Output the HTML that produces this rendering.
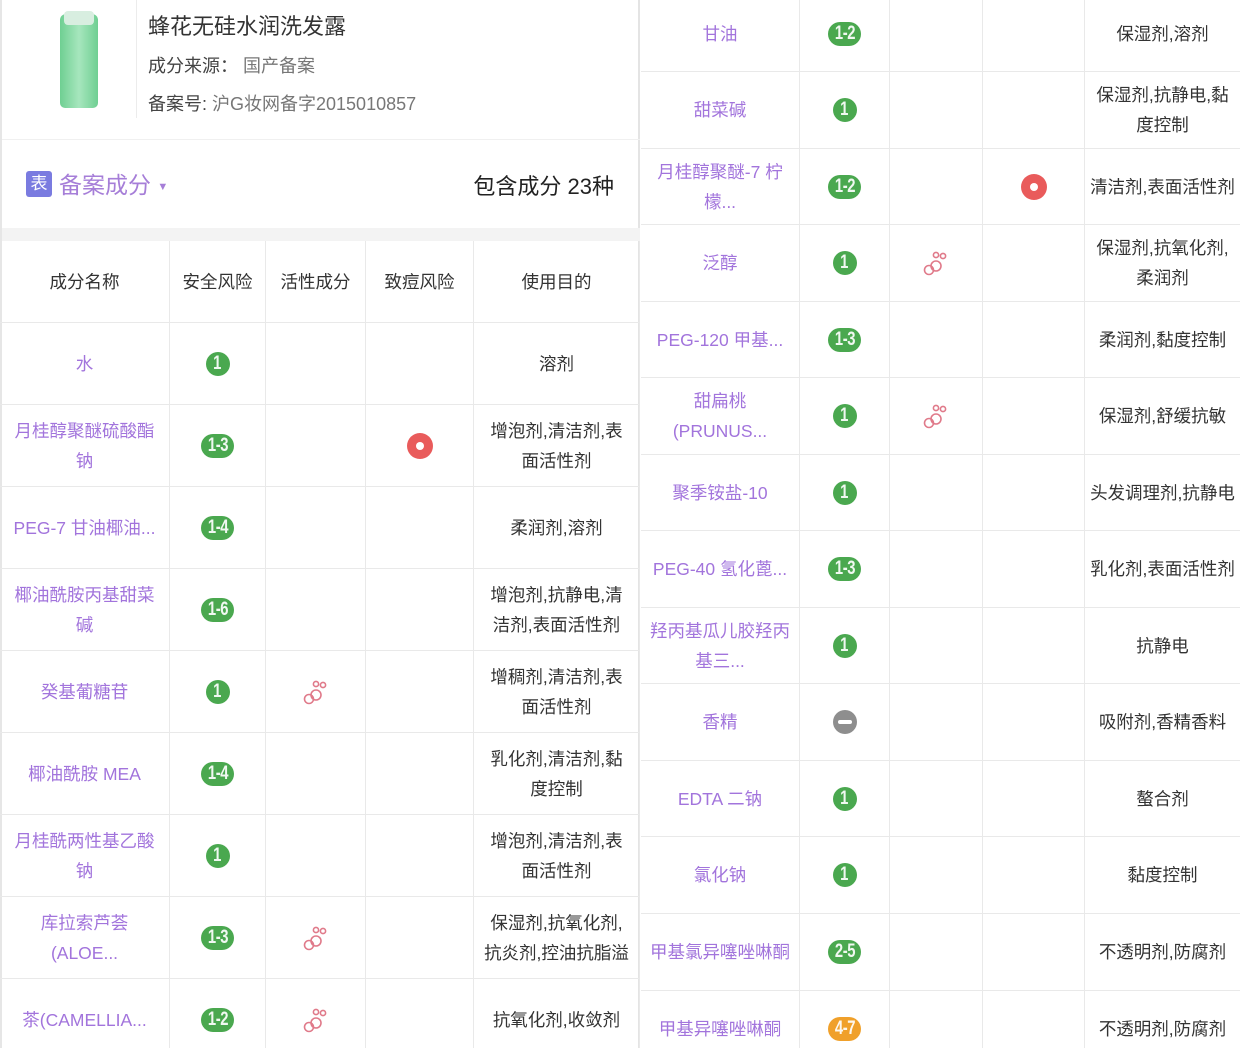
<!DOCTYPE html>
<html><head><meta charset="utf-8"><style>
*{margin:0;padding:0;box-sizing:border-box}
html,body{width:1240px;height:1048px;overflow:hidden}
body{background:#fff;font-family:"Liberation Sans","Noto Sans CJK SC",sans-serif;position:relative}
.row{position:absolute;display:flex;border-bottom:1px solid #e9e9e9}
.c{display:flex;align-items:center;justify-content:center;text-align:center;border-right:1px solid #e9e9e9;height:100%;font-size:17.5px;line-height:30px;color:#333}
.n{color:#a274dc}
.b{display:inline-flex;align-items:center;justify-content:center;height:24px;min-width:24px;padding:0 4px;border-radius:12px;background:#4aa84f;color:#fff}
.b span{display:inline-block;font-size:19px;line-height:24px;transform:scaleX(.78);letter-spacing:-0.5px;opacity:.92}
.o{background:#f0a02a}
.acne{width:26px;height:26px;border-radius:50%;background:#e95b5b;position:relative}
.acne:after{content:"";position:absolute;left:9px;top:9px;width:8px;height:8px;border-radius:50%;background:#fff}
.minus{width:24px;height:24px;border-radius:50%;background:#8e8e8e;position:relative}
.minus:after{content:"";position:absolute;left:5px;top:10px;width:14px;height:4px;background:#fff;border-radius:2px}
</style></head><body>
<div style="position:absolute;left:0;top:0;width:640px;height:1048px;border-right:2px solid #e4e4e4;border-left:2px solid #e6e6e6">
 <div style="position:absolute;left:58px;top:14px;width:38px;height:94px;border-radius:6px 6px 5px 5px;background:linear-gradient(90deg,#6fcf92,#a6e6bd 50%,#6fcf92)"></div>
 <div style="position:absolute;left:62px;top:11px;width:30px;height:14px;background:#d8eee0;border-radius:4px"></div>
 <div style="position:absolute;left:134px;top:0;width:1px;height:118px;background:#ececec"></div>
 <div style="position:absolute;left:146px;top:9px;font-size:22px;color:#333">蜂花无硅水润洗发露</div>
 <div style="position:absolute;left:146px;top:52px;font-size:18px;color:#444">成分来源：&nbsp;<span style="color:#777">国产备案</span></div>
 <div style="position:absolute;left:146px;top:90px;font-size:18px;color:#444">备案号: <span style="color:#777">沪G妆网备字2015010857</span></div>
 <div style="position:absolute;left:0;top:139px;width:638px;height:1px;background:#f0f0f0"></div>
 <div style="position:absolute;left:24px;top:171px;width:26px;height:26px;background:#7a7be0;border-radius:3px;color:#fff;font-size:17px;text-align:center;line-height:26px">表</div>
 <div style="position:absolute;left:57px;top:166px;font-size:23px;color:#a67ed8">备案成分 <span style="font-size:11px;vertical-align:middle">▼</span></div>
 <div style="position:absolute;right:24px;top:169px;font-size:22px;color:#222">包含成分 23种</div>
 <div style="position:absolute;left:0;top:228px;width:638px;height:13px;background:#f3f3f3"></div>
</div>
<div style="position:absolute;left:0;top:241px;width:640px">
 <div class="row" style="top:0;height:82px"><div class="c" style="width:170px">成分名称</div><div class="c" style="width:96px">安全风险</div><div class="c" style="width:100px">活性成分</div><div class="c" style="width:108px">致痘风险</div><div class="c" style="width:166px">使用目的</div></div>
</div>
<div style="position:absolute;left:0;top:323px;width:640px">
 <div class="row" style="top:0;height:82px"><div class="c n" style="width:170px">水</div><div class="c" style="width:96px"><b class="b"><span>1</span></b></div><div class="c" style="width:100px"></div><div class="c" style="width:108px"></div><div class="c" style="width:166px">溶剂</div></div>
 <div class="row" style="top:82px;height:82px"><div class="c n" style="width:170px">月桂醇聚醚硫酸酯<br>钠</div><div class="c" style="width:96px"><b class="b"><span>1-3</span></b></div><div class="c" style="width:100px"></div><div class="c" style="width:108px"><div class="acne"></div></div><div class="c" style="width:166px">增泡剂,清洁剂,表<br>面活性剂</div></div>
 <div class="row" style="top:164px;height:82px"><div class="c n" style="width:170px">PEG-7 甘油椰油...</div><div class="c" style="width:96px"><b class="b"><span>1-4</span></b></div><div class="c" style="width:100px"></div><div class="c" style="width:108px"></div><div class="c" style="width:166px">柔润剂,溶剂</div></div>
 <div class="row" style="top:246px;height:82px"><div class="c n" style="width:170px">椰油酰胺丙基甜菜<br>碱</div><div class="c" style="width:96px"><b class="b"><span>1-6</span></b></div><div class="c" style="width:100px"></div><div class="c" style="width:108px"></div><div class="c" style="width:166px">增泡剂,抗静电,清<br>洁剂,表面活性剂</div></div>
 <div class="row" style="top:328px;height:82px"><div class="c n" style="width:170px">癸基葡糖苷</div><div class="c" style="width:96px"><b class="b"><span>1</span></b></div><div class="c" style="width:100px">BUB</div><div class="c" style="width:108px"></div><div class="c" style="width:166px">增稠剂,清洁剂,表<br>面活性剂</div></div>
 <div class="row" style="top:410px;height:82px"><div class="c n" style="width:170px">椰油酰胺 MEA</div><div class="c" style="width:96px"><b class="b"><span>1-4</span></b></div><div class="c" style="width:100px"></div><div class="c" style="width:108px"></div><div class="c" style="width:166px">乳化剂,清洁剂,黏<br>度控制</div></div>
 <div class="row" style="top:492px;height:82px"><div class="c n" style="width:170px">月桂酰两性基乙酸<br>钠</div><div class="c" style="width:96px"><b class="b"><span>1</span></b></div><div class="c" style="width:100px"></div><div class="c" style="width:108px"></div><div class="c" style="width:166px">增泡剂,清洁剂,表<br>面活性剂</div></div>
 <div class="row" style="top:574px;height:82px"><div class="c n" style="width:170px">库拉索芦荟<br>(ALOE...</div><div class="c" style="width:96px"><b class="b"><span>1-3</span></b></div><div class="c" style="width:100px">BUB</div><div class="c" style="width:108px"></div><div class="c" style="width:166px;white-space:nowrap">保湿剂,抗氧化剂,<br>抗炎剂,控油抗脂溢</div></div>
 <div class="row" style="top:656px;height:82px"><div class="c n" style="width:170px">茶(CAMELLIA...</div><div class="c" style="width:96px"><b class="b"><span>1-2</span></b></div><div class="c" style="width:100px">BUB</div><div class="c" style="width:108px"></div><div class="c" style="width:166px">抗氧化剂,收敛剂</div></div>
</div>
<div style="position:absolute;left:641px;top:0;width:599px">
 <div class="row" style="top:-4px;height:76px"><div class="c n" style="width:159px">甘油</div><div class="c" style="width:90px"><b class="b"><span>1-2</span></b></div><div class="c" style="width:93px"></div><div class="c" style="width:102px"></div><div class="c" style="width:155px;border-right:0">保湿剂,溶剂</div></div>
 <div class="row" style="top:72px;height:77px"><div class="c n" style="width:159px">甜菜碱</div><div class="c" style="width:90px"><b class="b"><span>1</span></b></div><div class="c" style="width:93px"></div><div class="c" style="width:102px"></div><div class="c" style="width:155px;border-right:0">保湿剂,抗静电,黏<br>度控制</div></div>
 <div class="row" style="top:149px;height:76px"><div class="c n" style="width:159px">月桂醇聚醚-7 柠<br>檬...</div><div class="c" style="width:90px"><b class="b"><span>1-2</span></b></div><div class="c" style="width:93px"></div><div class="c" style="width:102px"><div class="acne"></div></div><div class="c" style="width:155px;border-right:0;white-space:nowrap">清洁剂,表面活性剂</div></div>
 <div class="row" style="top:225px;height:77px"><div class="c n" style="width:159px">泛醇</div><div class="c" style="width:90px"><b class="b"><span>1</span></b></div><div class="c" style="width:93px">BUB</div><div class="c" style="width:102px"></div><div class="c" style="width:155px;border-right:0">保湿剂,抗氧化剂,<br>柔润剂</div></div>
 <div class="row" style="top:302px;height:76px"><div class="c n" style="width:159px">PEG-120 甲基...</div><div class="c" style="width:90px"><b class="b"><span>1-3</span></b></div><div class="c" style="width:93px"></div><div class="c" style="width:102px"></div><div class="c" style="width:155px;border-right:0">柔润剂,黏度控制</div></div>
 <div class="row" style="top:378px;height:77px"><div class="c n" style="width:159px">甜扁桃<br>(PRUNUS...</div><div class="c" style="width:90px"><b class="b"><span>1</span></b></div><div class="c" style="width:93px">BUB</div><div class="c" style="width:102px"></div><div class="c" style="width:155px;border-right:0">保湿剂,舒缓抗敏</div></div>
 <div class="row" style="top:455px;height:76px"><div class="c n" style="width:159px">聚季铵盐-10</div><div class="c" style="width:90px"><b class="b"><span>1</span></b></div><div class="c" style="width:93px"></div><div class="c" style="width:102px"></div><div class="c" style="width:155px;border-right:0;white-space:nowrap">头发调理剂,抗静电</div></div>
 <div class="row" style="top:531px;height:77px"><div class="c n" style="width:159px">PEG-40 氢化蓖...</div><div class="c" style="width:90px"><b class="b"><span>1-3</span></b></div><div class="c" style="width:93px"></div><div class="c" style="width:102px"></div><div class="c" style="width:155px;border-right:0;white-space:nowrap">乳化剂,表面活性剂</div></div>
 <div class="row" style="top:608px;height:76px"><div class="c n" style="width:159px">羟丙基瓜儿胶羟丙<br>基三...</div><div class="c" style="width:90px"><b class="b"><span>1</span></b></div><div class="c" style="width:93px"></div><div class="c" style="width:102px"></div><div class="c" style="width:155px;border-right:0">抗静电</div></div>
 <div class="row" style="top:684px;height:77px"><div class="c n" style="width:159px">香精</div><div class="c" style="width:90px"><div class="minus"></div></div><div class="c" style="width:93px"></div><div class="c" style="width:102px"></div><div class="c" style="width:155px;border-right:0">吸附剂,香精香料</div></div>
 <div class="row" style="top:761px;height:76px"><div class="c n" style="width:159px">EDTA 二钠</div><div class="c" style="width:90px"><b class="b"><span>1</span></b></div><div class="c" style="width:93px"></div><div class="c" style="width:102px"></div><div class="c" style="width:155px;border-right:0">螯合剂</div></div>
 <div class="row" style="top:837px;height:77px"><div class="c n" style="width:159px">氯化钠</div><div class="c" style="width:90px"><b class="b"><span>1</span></b></div><div class="c" style="width:93px"></div><div class="c" style="width:102px"></div><div class="c" style="width:155px;border-right:0">黏度控制</div></div>
 <div class="row" style="top:914px;height:77px"><div class="c n" style="width:159px;white-space:nowrap">甲基氯异噻唑啉酮</div><div class="c" style="width:90px"><b class="b"><span>2-5</span></b></div><div class="c" style="width:93px"></div><div class="c" style="width:102px"></div><div class="c" style="width:155px;border-right:0">不透明剂,防腐剂</div></div>
 <div class="row" style="top:991px;height:77px"><div class="c n" style="width:159px">甲基异噻唑啉酮</div><div class="c" style="width:90px"><b class="b o"><span>4-7</span></b></div><div class="c" style="width:93px"></div><div class="c" style="width:102px"></div><div class="c" style="width:155px;border-right:0">不透明剂,防腐剂</div></div>
</div>
<script>
var s='<svg width="26" height="28" viewBox="0 0 26 28" fill="none" stroke="#e07a8a" stroke-width="1.6"><circle cx="6" cy="21" r="4.5"/><circle cx="13" cy="17" r="5"/><circle cx="13" cy="6" r="2.6"/><circle cx="20" cy="7" r="2.6"/></svg>';
document.querySelectorAll('.c').forEach(function(e){if(e.textContent==='BUB')e.innerHTML=s;});
</script>
</body></html>
